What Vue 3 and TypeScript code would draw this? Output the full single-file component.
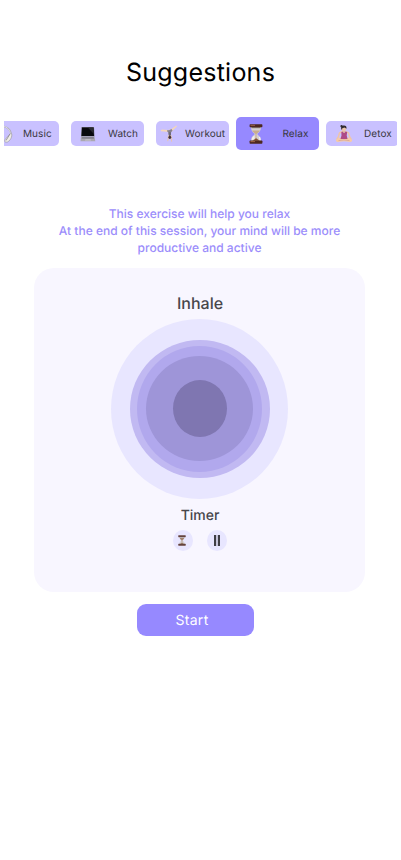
<script setup lang="ts">
import { ref } from 'vue'

interface Category {
  id: string
  label: string
}

const categories: Category[] = [
  { id: 'music', label: 'Music' },
  { id: 'watch', label: 'Watch' },
  { id: 'workout', label: 'Workout' },
  { id: 'relax', label: 'Relax' },
  { id: 'detox', label: 'Detox' },
]
const active = ref('relax')
</script>

<template>
  <main class="screen">
    <h1 class="title">Suggestions</h1>

    <nav class="tabs">
      <button
        v-for="c in categories"
        :key="c.id"
        type="button"
        class="tab"
        :class="[c.id, { active: active === c.id }]"
        @click="active = c.id"
      >
        <svg v-if="c.id === 'music'" class="icon" viewBox="0 0 18 18">
          <path d="M3 12C0 6 4 1 9 1.500C14 2.500 17 7 15.500 11.500" fill="none" stroke="#aaa8b4" stroke-width="1.700" />
          <path d="M3 12C0 6 4 1 9 1.500C13.500 2.500 16.500 7 15 11.500" fill="none" stroke="#e8e7ee" stroke-width=".8" />
          <path d="M15.800 8C18 9 16.500 15 12.500 17C9 17.800 9 15.500 11 13.500Z" fill="#eeece8" stroke="#96939b" stroke-width=".6" />
          <path d="M15 9L11 15.500" stroke="#8a8790" stroke-width=".8" />
        </svg>
        <svg v-else-if="c.id === 'watch'" class="icon" viewBox="0 0 16 16">
          <path d="M1.500 1H14L14.500 10.500H1Z" fill="#777583" />
          <path d="M2 1.500H13.500L14 10H1.500Z" fill="#08090d" />
          <path d="M8 1.700H13.400L13.900 8Z" fill="#292a30" />
          <path d="M1 10.500H14.500L15.300 15.200H.5Z" fill="#aaa8b0" />
          <path d="M2 11H13.800L14.200 12.700H1.600Z" fill="#858390" />
          <path d="M5.500 13H10.500L11 14.700H5Z" fill="#bebbc4" />
        </svg>
        <svg v-else-if="c.id === 'workout'" class="icon" viewBox="0 0 18 18">
          <path d="M.8 5.200L2 4.500L8 5L11 4.200L16.300 .4L17 1.200L11.800 6.600L10.500 7.500H8.500L6.500 6.800L1 6.200Z" fill="#f3d6b8" />
          <path d="M7.300 4.900L9 5.300L11.500 4L12.500 5.500L11 7.500L10.700 9H8.700L8.300 7.300L7.300 6.800Z" fill="#858190" />
          <path d="M8.600 7.300H11V11.500H8.500Z" fill="#706b78" />
          <path d="M8.500 10.500L7.800 15.800M11 10.500L11.600 16.300" fill="none" stroke="#e7c5b0" stroke-width="1.100" stroke-linecap="round" />
          <ellipse cx="9.800" cy="12.300" rx="1.400" ry="1.600" fill="#44343a" />
        </svg>
        <svg v-else-if="c.id === 'relax'" class="icon" viewBox="0 0 14 20">
          <path d="M2 3H12C12 7 10 8 8.200 10C10 12 12 13 12 17H2C2 13 4 12 5.800 10C4 8 2 7 2 3Z" fill="#d5d0d2" />
          <path d="M3 6.500H11C10 8 8.500 9 7.500 10V14L11 17H3L6.500 14V10C5.500 9 4 8 3 6.500Z" fill="#c9ae8e" />
          <path d="M4 16.800L7 14.200L10.500 16.800Z" fill="#805139" />
          <path d="M2.500 3H11.500V4.200H2.500Z" fill="#857970" />
          <path d="M10.500 13Q11 14 11 16" fill="none" stroke="#f8f5f1" stroke-width="1.200" />
          <path d="M3 14Q4 12 5.500 11.500V15L3 16Z" fill="#f2eee9" />
          <rect x=".6" y=".3" width="12.800" height="3" rx=".7" fill="#4c2821" />
          <rect x=".6" y="16.600" width="12.800" height="3.100" rx=".7" fill="#4c2821" />
          <path d="M1.500 1.300H6M1.500 17.600H6" stroke="#a5694b" stroke-width=".9" />
        </svg>
        <svg v-else class="icon" viewBox="0 0 18 18">
          <path d="M7 6.800L4.500 8L3.300 12L2 14M11 6.800L13.500 8L14.700 12L16 14" fill="none" stroke="#efc5a9" stroke-width="1.500" stroke-linecap="round" stroke-linejoin="round" />
          <path d="M5 12.400L1.500 14.200Q0 16.300 2.500 17L9 16.200L15.500 17Q18 16.300 16.500 14.200L13 12.400Z" fill="#f6cba6" />
          <path d="M6.300 7L8 6.500L9 8L10.500 6.500L12.200 7L11.700 10.500L12.500 14H5.500L6.500 10.500Z" fill="#ae4b87" />
          <path d="M3.500 15.600Q9 14.200 14.500 15.600" fill="none" stroke="#c99991" stroke-width=".6" />
          <path d="M8 5H10V7.500L9 8L8 7.300Z" fill="#ddb19f" />
          <ellipse cx="8.800" cy="3.800" rx="2.300" ry="2.700" fill="#edc5ac" />
          <path d="M6.200 4Q5.500 .5 8.500 .5Q11.800 .1 11.500 3.700L9.500 2.500L7.300 3.200L7 5Z" fill="#302b30" />
          <circle cx="6.500" cy="1.200" r="1.100" fill="#302b30" />
        </svg>
        <span>{{ c.label }}</span>
      </button>
    </nav>

    <p class="intro">
      This exercise will help you relax<br />
      At the end of this session, your mind will be more<br />
      productive and active
    </p>

    <section class="card">
      <h2 class="phase">Inhale</h2>
      <svg class="breath" viewBox="0 0 177 180">
        <ellipse cx="88.500" cy="90" rx="88.500" ry="90" fill="#e8e6ff" />
        <ellipse cx="89" cy="90" rx="70" ry="69" fill="#c1b9f2" />
        <ellipse cx="88.500" cy="90" rx="62.500" ry="63" fill="#b1a8ed" />
        <ellipse cx="88.500" cy="89.500" rx="53.500" ry="52.500" fill="#9e95d8" />
        <ellipse cx="89" cy="89.500" rx="27" ry="28.500" fill="#7f76b1" />
      </svg>
      <h3 class="timer">Timer</h3>
      <div class="controls">
        <button type="button" class="round" aria-label="Timer">
          <svg class="glass" viewBox="0 0 14 20">
            <path d="M2 3H12C12 7 10 8 8.200 10C10 12 12 13 12 17H2C2 13 4 12 5.800 10C4 8 2 7 2 3Z" fill="#d5d3d8" />
            <path d="M3 5.500H11C10 8 8.500 9 7.500 10V14L11 17H3L6.500 14V10C5.500 9 4 8 3 5.500Z" fill="#a3826e" />
            <rect x=".2" y=".5" width="13.600" height="3.400" rx=".8" fill="#64433e" />
            <rect x=".2" y="16.100" width="13.600" height="3.400" rx=".8" fill="#64433e" />
          </svg>
        </button>
        <button type="button" class="round" aria-label="Pause">
          <svg class="pause" viewBox="0 0 6 11">
            <path d="M0 0H2.200V11H0ZM3.800 0H6V11H3.800Z" fill="#3f3e45" />
          </svg>
        </button>
      </div>
    </section>

    <button type="button" class="start">Start</button>
  </main>
</template>

<style>
body {
  margin: 0;
  background: #fff;
}
</style>

<style scoped>
.screen {
  box-sizing: border-box;
  width: 401px;
  height: 860px;
  padding-top: 56px;
  overflow: hidden;
  background: #fff;
  font-family: Inter, "Liberation Sans", sans-serif;
  text-rendering: geometricPrecision;
  color: #39383e;
}
button {
  padding: 0;
  border: 0;
  font-family: inherit;
  color: inherit;
  text-rendering: inherit;
}
h1, h2, h3, p {
  margin: 0;
  font-weight: 400;
}
.title {
  height: 32px;
  line-height: 34px;
  font-size: 25px;
  letter-spacing: 0.25px;
  text-align: center;
  color: #000;
}
.tabs {
  display: flex;
  align-items: center;
  gap: 12px;
  height: 33px;
  margin: 29px 4px 0;
  overflow: hidden;
}
.tab {
  display: flex;
  flex: none;
  align-items: center;
  box-sizing: border-box;
  width: 73px;
  height: 25px;
  border-radius: 5px;
  background: #c9c1ff;
  font-size: 10px;
  line-height: 15px;
  letter-spacing: 0.06px;
  white-space: nowrap;
}
.tab span {
  padding-top: 2px;
}
.icon {
  flex: none;
  display: block;
}
.music {
  margin-left: -18px;
  padding-left: 9px;
}
.music .icon {
  width: 18px;
  height: 18px;
  margin-right: 10px;
}
.watch {
  padding-left: 9px;
}
.watch .icon {
  width: 16px;
  height: 16px;
  margin-right: 12px;
}
.workout {
  padding-left: 4px;
}
.workout .icon {
  width: 18px;
  height: 18px;
  margin-right: 7px;
}
.relax {
  margin: 0 -5px;
  padding-left: 13px;
}
.relax.active {
  width: 83px;
  height: 33px;
  background: #9689ff;
}
.relax .icon {
  width: 14px;
  height: 20px;
  margin-right: 19.500px;
}
.detox {
  padding-left: 9px;
}
.detox .icon {
  width: 18px;
  height: 18px;
  margin-right: 11px;
}
.intro {
  margin-top: 55px;
  padding-right: 2px;
  font-size: 12px;
  font-weight: 500;
  line-height: 17px;
  text-align: center;
  color: #9b8dfb;
}
.card {
  display: flex;
  flex-direction: column;
  align-items: center;
  box-sizing: border-box;
  width: 331px;
  height: 324px;
  margin: 12px 0 0 34px;
  padding-top: 25px;
  border-radius: 20px;
  background: #f8f6ff;
}
.phase {
  height: 20px;
  padding-left: 1px;
  line-height: 20px;
  font-size: 16px;
  font-weight: 500;
  color: #47464b;
}
.breath {
  display: block;
  width: 177px;
  height: 180px;
  margin-top: 6px;
}
.timer {
  height: 20px;
  margin-top: 6px;
  padding-left: 1px;
  line-height: 22px;
  font-size: 14px;
  font-weight: 500;
  color: #47464b;
}
.controls {
  display: flex;
  gap: 14px;
  margin-top: 5px;
}
.round {
  display: flex;
  align-items: center;
  justify-content: center;
  width: 20px;
  height: 21px;
  border-radius: 50%;
  background: #e8e6ff;
}
.glass {
  width: 8px;
  height: 11px;
  margin-right: 1px;
}
.pause {
  width: 6px;
  height: 11px;
}
.start {
  display: block;
  width: 117px;
  height: 32px;
  margin: 12px 0 0 137px;
  padding: 1px 7px 0 0;
  border-radius: 9px;
  background: #9689ff;
  font-size: 14px;
  letter-spacing: 0.3px;
  color: #fff;
}
</style>
